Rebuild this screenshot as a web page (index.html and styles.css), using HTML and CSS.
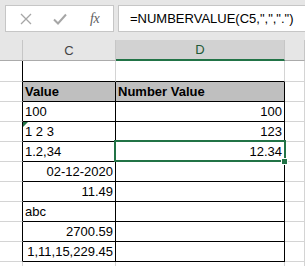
FILE: index.html
```html
<!DOCTYPE html>
<html lang="en">
<head>
  <meta charset="UTF-8">
  <title>NUMBERVALUE</title>
  <link rel="stylesheet" href="styles.css">
</head>
<body>
  <div class="formula-bar">
    <div class="fx-box">
      <svg class="icon" width="12" height="12" viewBox="0 0 12 12">
        <path d="M1 1 L11 11 M11 1 L1 11" stroke="#a6a6a6" stroke-width="1.3" fill="none"/>
      </svg>
      <svg class="icon" width="14" height="12" viewBox="0 0 14 12">
        <path d="M1 6.5 L5 10.5 L13 1.5" stroke="#a6a6a6" stroke-width="2" fill="none"/>
      </svg>
      <span class="fx">fx</span>
    </div>
    <div class="formula-input">=NUMBERVALUE(C5,",",".")</div>
  </div>

  <div class="sheet">
    <div class="col-head"></div>
    <div class="col-head">C</div>
    <div class="col-head active">D</div>
    <div class="col-head"></div>

    <div class="cell tl tall"></div>
    <div class="cell tt tall"></div>
    <div class="cell tt tall"></div>
    <div class="cell tall"></div>

    <div class="cell tl"></div>
    <div class="cell t head">Value</div>
    <div class="cell t head">Number Value</div>
    <div class="cell"></div>

    <div class="cell tl"></div>
    <div class="cell t">100</div>
    <div class="cell t num">100</div>
    <div class="cell"></div>

    <div class="cell tl"></div>
    <div class="cell t flag">1 2 3</div>
    <div class="cell t num">123</div>
    <div class="cell"></div>

    <div class="cell tl"></div>
    <div class="cell t">1.2,34</div>
    <div class="cell t num selected">12.34<span class="handle"></span></div>
    <div class="cell"></div>

    <div class="cell tl"></div>
    <div class="cell t num">02-12-2020</div>
    <div class="cell t"></div>
    <div class="cell"></div>

    <div class="cell tl"></div>
    <div class="cell t num">11.49</div>
    <div class="cell t"></div>
    <div class="cell"></div>

    <div class="cell tl"></div>
    <div class="cell t">abc</div>
    <div class="cell t"></div>
    <div class="cell"></div>

    <div class="cell tl"></div>
    <div class="cell t num">2700.59</div>
    <div class="cell t"></div>
    <div class="cell"></div>

    <div class="cell tl"></div>
    <div class="cell t num">1,11,15,229.45</div>
    <div class="cell t"></div>
    <div class="cell"></div>

    <div class="cell"></div>
    <div class="cell"></div>
    <div class="cell"></div>
    <div class="cell"></div>
  </div>
</body>
</html>
```

FILE: styles.css
```css
:root {
  --bar-bg: #e6e6e6;
  --grid: #d4d4d4;
  --excel-green: #217346;
}

body {
  margin: 0;
  width: 305px;
  height: 266px;
  overflow: hidden;
  background: #ffffff;
  font-family: "Liberation Sans", Arial, sans-serif;
  color: #000000;
}

/* Formula bar */
.formula-bar {
  height: 40px;
  box-sizing: border-box;
  padding: 5px 0 0 5px;
  display: flex;
  gap: 4px;
  background: var(--bar-bg);
}

.fx-box {
  width: 109px;
  height: 27px;
  box-sizing: border-box;
  background: #ffffff;
  border: 1px solid #c6c6c6;
  display: flex;
  align-items: center;
  padding-left: 14px;
}

.icon {
  display: block;
}

.icon + .icon {
  margin-left: 21px;
}

.fx {
  margin-left: 23px;
  font-family: "Liberation Serif", "Times New Roman", serif;
  font-style: italic;
  font-size: 14px;
  color: #606060;
  letter-spacing: -0.5px;
}

.formula-input {
  flex: 1;
  height: 27px;
  box-sizing: border-box;
  background: #ffffff;
  border: 1px solid #c6c6c6;
  border-right: none;
  padding: 5px 0 0 11px;
  font-size: 13px;
  white-space: nowrap;
}

/* Sheet grid */
.sheet {
  display: grid;
  grid-template-columns: 23px 93px 169px 1fr;
  position: relative;
}

.col-head {
  height: 21px;
  box-sizing: border-box;
  background: var(--bar-bg);
  border-right: 1px solid #c6c6c6;
  border-bottom: 1px solid #ababab;
  font-size: 13px;
  color: #444444;
  display: flex;
  justify-content: center;
  align-items: center;
}

.col-head.active {
  background: #d2d2d2;
  border-bottom: 2px solid var(--excel-green);
  color: #1e5a38;
}

.cell {
  height: 20px;
  box-sizing: border-box;
  border-right: 1px solid var(--grid);
  border-bottom: 1px solid var(--grid);
  padding: 0 2px 3px 2px;
  font-size: 13px;
  line-height: 13px;
  display: flex;
  align-items: flex-end;
  white-space: nowrap;
  position: relative;
}

.cell.tall {
  height: 21px;
}

.cell.t {
  border-right-color: #000000;
  border-bottom-color: #000000;
}

.cell.tl {
  border-right-color: #000000;
}

.cell.tt {
  border-bottom-color: #000000;
}

.cell.head {
  background: #bfbfbf;
  font-weight: bold;
}

.cell.num {
  justify-content: flex-end;
}

/* Text-number warning marker */
.cell.flag::before {
  content: "";
  position: absolute;
  top: 0;
  left: 0;
  border-top: 5px solid var(--excel-green);
  border-right: 5px solid transparent;
}

/* Active cell */
.cell.selected::after {
  content: "";
  position: absolute;
  top: -2px;
  left: -2px;
  right: -2px;
  bottom: -1px;
  border: 2px solid var(--excel-green);
}

.handle {
  position: absolute;
  right: -4px;
  bottom: -4px;
  width: 5px;
  height: 5px;
  background: var(--excel-green);
  border: 1px solid #ffffff;
  z-index: 2;
}
```
